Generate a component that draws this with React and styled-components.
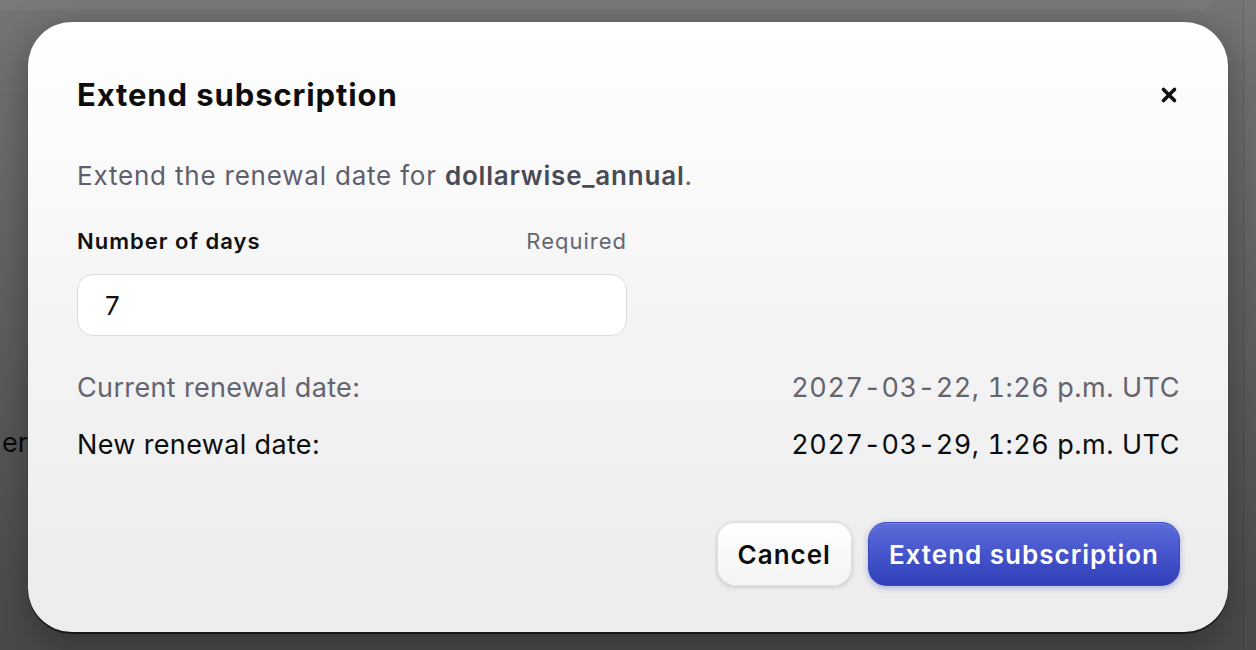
import React from "react";
import styled, { createGlobalStyle } from "styled-components";

const GlobalStyle = createGlobalStyle`
  html, body {
    margin: 0;
    padding: 0;
    height: 100%;
    overflow: hidden;
  }
  body {
    font-family: Inter, "Noto Sans", "Liberation Sans", sans-serif;
    -webkit-font-smoothing: antialiased;
  }
`;

const Page = styled.div`
  position: relative;
  width: 1256px;
  height: 650px;
  overflow: hidden;
  background: #f4f4f4;
`;

const BackPage = styled.div`
  position: absolute;
  inset: 0;
  display: grid;
  grid-template-columns: 1fr 13px;
`;

const BackMain = styled.div`
  display: flex;
  flex-direction: column;
  overflow: hidden;
`;

const BackHeader = styled.div`
  height: 10px;
  margin-right: 33px;
  border-bottom-right-radius: 8px;
  background: #ffffff;
`;

const BackText = styled.div`
  margin-top: 416px;
  padding-left: 2px;
  font-size: 27px;
  color: #1c1c1c;
`;

const BackSide = styled.div`
  border-left: 1px solid #d8d8d8;
  background: #f7f7f7;
`;

const Overlay = styled.div`
  position: absolute;
  inset: 0;
  display: flex;
  justify-content: center;
  align-items: flex-start;
  padding-top: 22px;
  background: linear-gradient(180deg, rgba(0, 0, 0, 0.52) 0%, rgba(0, 0, 0, 0.7) 100%);
`;

const Modal = styled.div`
  box-sizing: border-box;
  width: 1200px;
  height: 610px;
  padding: 55px 48px 46px 49px;
  border-radius: 44px;
  background: linear-gradient(180deg, #ffffff 0%, #f4f4f4 50%, #ececec 100%);
  box-shadow: 0 2px 0 rgba(20, 20, 20, 0.85), 0 10px 40px rgba(0, 0, 0, 0.35);
  display: flex;
  flex-direction: column;
`;

const Header = styled.div`
  display: flex;
  align-items: center;
  justify-content: space-between;
`;

const Title = styled.h2`
  margin: 0;
  font-size: 31px;
  line-height: 36px;
  font-weight: 700;
  color: #0d0d0d;
  letter-spacing: 0.9px;
`;

const CloseButton = styled.button`
  display: flex;
  align-items: center;
  justify-content: center;
  width: 28px;
  height: 28px;
  margin-right: -3px;
  padding: 0;
  border: none;
  background: none;
  cursor: pointer;
`;

const Description = styled.p`
  margin: 47px 0 0;
  font-size: 26px;
  line-height: 32px;
  letter-spacing: 0.8px;
  color: #5e5e6c;

  strong {
    font-weight: 600;
    color: #4a4a56;
  }
`;

const Field = styled.div`
  width: 550px;
  margin-top: 35px;
  display: flex;
  flex-direction: column;
  gap: 19px;
`;

const LabelRow = styled.div`
  display: flex;
  justify-content: space-between;
  align-items: baseline;
`;

const Label = styled.label`
  font-size: 22px;
  line-height: 28px;
  font-weight: 600;
  letter-spacing: 1px;
  color: #111;
`;

const Hint = styled.span`
  font-size: 22px;
  line-height: 28px;
  letter-spacing: 1px;
  color: #66666f;
`;

const Input = styled.input`
  box-sizing: border-box;
  width: 100%;
  height: 62px;
  padding: 0 27px;
  border: 1.5px solid #dcdcdc;
  border-radius: 16px;
  background: #fff;
  font-family: inherit;
  font-size: 26px;
  color: #111;
  outline: none;
`;

const Details = styled.div`
  margin-top: 36px;
  display: flex;
  flex-direction: column;
  gap: 25px;
`;

const DetailRow = styled.div`
  display: flex;
  justify-content: space-between;
  font-size: 27px;
  line-height: 32px;
  letter-spacing: 0.35px;
  color: ${(p) => (p.$muted ? "#64646f" : "#0d0d0d")};
`;

const DateValue = styled.span`
  font-variant-numeric: tabular-nums;
  letter-spacing: 0.55px;
`;

const Footer = styled.div`
  margin-top: auto;
  display: flex;
  justify-content: flex-end;
  gap: 16px;
`;

const Button = styled.button`
  height: 64px;
  padding: 0 20px;
  border-radius: 18px;
  font-family: inherit;
  font-size: 26px;
  font-weight: 600;
  letter-spacing: 1px;
  cursor: pointer;
  border: 1px solid ${(p) => (p.$primary ? "#3c4ac2" : "rgba(0, 0, 0, 0.1)")};
  color: ${(p) => (p.$primary ? "#ffffff" : "#0d0d0d")};
  background: ${(p) =>
    p.$primary
      ? "linear-gradient(180deg, #5d6cd9 0%, #4554cb 50%, #3040b8 100%)"
      : "linear-gradient(180deg, #ffffff 0%, #f4f4f4 100%)"};
  box-shadow: ${(p) =>
    p.$primary
      ? "0 2px 6px rgba(49, 64, 184, 0.35), inset 0 1px 0 rgba(255,255,255,0.15)"
      : "0 1px 4px rgba(0, 0, 0, 0.18)"};
`;

const XIcon = () => (
  <svg width="18" height="18" viewBox="0 0 18 18" fill="none">
    <path d="M3.5 3.5 L14.5 14.5 M14.5 3.5 L3.5 14.5" stroke="#0d0d0d" strokeWidth="3.6" strokeLinecap="round" />
  </svg>
);

export default function App() {
  return (
    <Page>
      <GlobalStyle />
      <BackPage>
        <BackMain>
          <BackHeader />
          <BackText>era</BackText>
        </BackMain>
        <BackSide />
      </BackPage>
      <Overlay>
        <Modal role="dialog">
          <Header>
            <Title>Extend subscription</Title>
            <CloseButton aria-label="Close">
              <XIcon />
            </CloseButton>
          </Header>
          <Description>
            Extend the renewal date for <strong>dollarwise_annual</strong>.
          </Description>
          <Field>
            <LabelRow>
              <Label htmlFor="days">Number of days</Label>
              <Hint>Required</Hint>
            </LabelRow>
            <Input id="days" type="text" defaultValue="7" />
          </Field>
          <Details>
            <DetailRow $muted>
              <span>Current renewal date:</span>
              <DateValue>2027-03-22, 1:26 p.m. UTC</DateValue>
            </DetailRow>
            <DetailRow>
              <span>New renewal date:</span>
              <DateValue>2027-03-29, 1:26 p.m. UTC</DateValue>
            </DetailRow>
          </Details>
          <Footer>
            <Button>Cancel</Button>
            <Button $primary>Extend subscription</Button>
          </Footer>
        </Modal>
      </Overlay>
    </Page>
  );
}
